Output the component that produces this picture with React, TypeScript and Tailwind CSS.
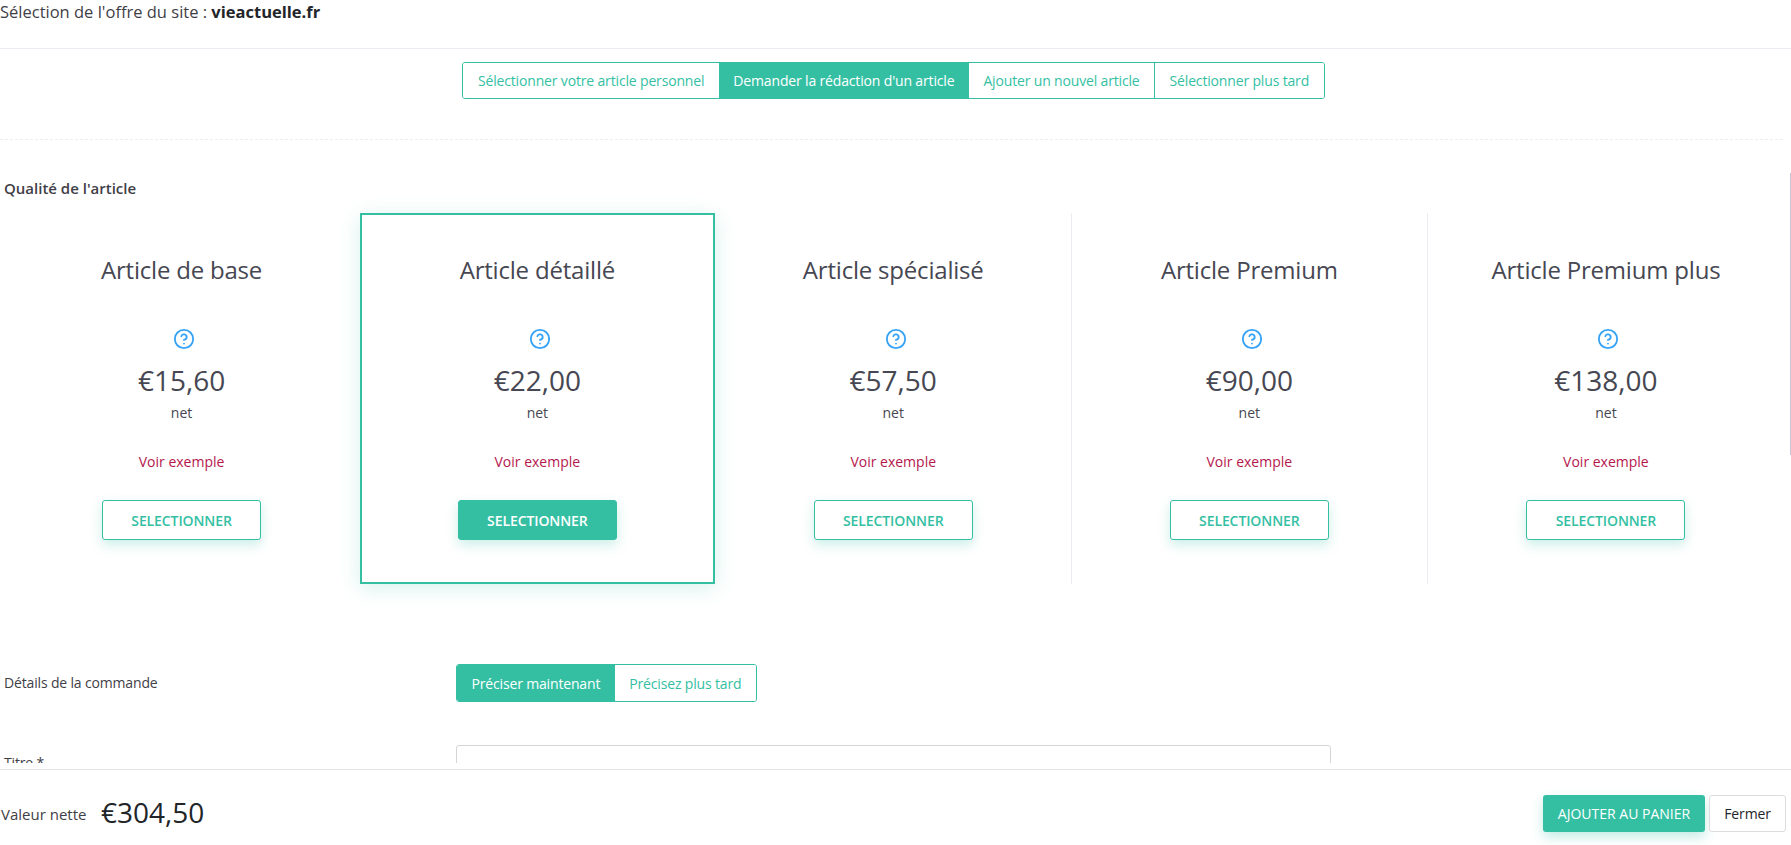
import { CircleHelp } from 'lucide-react';

const offers = [
  { name: 'Article de base', price: '€15,60' },
  { name: 'Article détaillé', price: '€22,00', selected: true },
  { name: 'Article spécialisé', price: '€57,50', divider: true },
  { name: 'Article Premium', price: '€90,00', divider: true },
  { name: 'Article Premium plus', price: '€138,00' },
];

const articleTabs = [
  { label: 'Sélectionner votre article personnel' },
  { label: "Demander la rédaction d'un article", active: true },
  { label: 'Ajouter un nouvel article' },
  { label: 'Sélectionner plus tard' },
];

const detailTabs = [
  { label: 'Préciser maintenant', active: true },
  { label: 'Précisez plus tard' },
];

function TabGroup({ tabs, height }: { tabs: { label: string; active?: boolean }[]; height: string }) {
  return (
    <div className={`flex ${height} rounded-[3px] border border-[#34bfa3] overflow-hidden text-[14px] tracking-[-0.16px]`}>
      {tabs.map((tab, i) => (
        <div
          key={tab.label}
          className={`flex items-center px-[14.5px] whitespace-nowrap ${
            tab.active ? 'bg-[#34bfa3] text-white' : 'bg-white text-[#34bfa3]'
          } ${i > 0 && !tab.active && !tabs[i - 1].active ? 'border-l border-[#34bfa3]' : ''}`}
        >
          {tab.label}
        </div>
      ))}
    </div>
  );
}

function OfferCard({ offer }: { offer: (typeof offers)[number] }) {
  return (
    <div
      className={`h-[371px] flex flex-col items-center text-[#464752] ${
        offer.selected
          ? 'w-[355.5px] mr-[0.6px] pt-[35px] border-2 border-[#34bfa3] shadow-[0_4px_20px_rgba(52,191,163,0.2)]'
          : 'w-[356.1px] pt-[37px]'
      } ${offer.divider ? 'border-r border-[#ebedf2]' : ''}`}
    >
      <h3 className="h-[40px] flex items-center text-[24px] tracking-[-0.2px]">{offer.name}</h3>
      <div className="mt-[38px] ml-[5px] h-[20px] text-[#36a3f7]">
        <CircleHelp size={22} strokeWidth={2} />
      </div>
      <div className="mt-[12px] h-[40px] flex items-center text-[28px]">{offer.price}</div>
      <div className="mt-[3px] text-[14px] leading-[20px]">net</div>
      <a className="mt-[29px] text-[14px] leading-[20px] text-[#b5174d]">Voir exemple</a>
      <button
        className={`mt-[28px] w-[159px] h-[40px] rounded-[3px] border border-[#34bfa3] text-[14px] tracking-[-0.1px] font-semibold shadow-[0_5px_12px_rgba(52,191,163,0.25)] ${
          offer.selected ? 'bg-[#34bfa3] text-white' : 'bg-white text-[#34bfa3]'
        }`}
      >
        SELECTIONNER
      </button>
    </div>
  );
}

export default function App() {
  return (
    <div className="relative h-[845px] flex flex-col overflow-hidden bg-white text-[#3f4047] font-['Open_Sans',sans-serif]">
      <div className="flex-1 min-h-0 overflow-hidden">
        {/* en-tête */}
        <div className="h-[49px] pt-px border-b border-[#ebedf2] text-[16.5px] leading-[22px]">
          Sélection de l'offre du site : <b className="text-[#212529]">vieactuelle.fr</b>
        </div>

        <div className="flex justify-center pt-[13px] pr-[4px]">
          <TabGroup tabs={articleTabs} height="h-[37px]" />
        </div>

        <div className="mt-[40px] mr-[8px] border-t border-dashed border-[#ebedf2]" />

        {/* qualité */}
        <div className="mt-[38px] pl-[4px] h-[21px] text-[15px] leading-[20px] font-semibold">
          Qualité de l'article
        </div>

        <div className="mt-[14px] pl-[3.5px] flex">
          {offers.map((offer) => (
            <OfferCard key={offer.name} offer={offer} />
          ))}
        </div>

        {/* commande */}
        <div className="mt-[80px] flex items-center h-[38px]">
          <div className="w-[456px] pl-[4px] pb-[2px] text-[14px] tracking-[-0.16px]">Détails de la commande</div>
          <TabGroup tabs={detailTabs} height="h-[38px]" />
        </div>

        <div className="mt-[43px] flex items-start">
          <div className="w-[456px] pl-[4px] pt-[8px] text-[14px] leading-[20px] tracking-[-0.16px]">Titre *</div>
          <div className="w-[875px] h-[40px] rounded-[3px] border border-[#d5d5d5]" />
        </div>
      </div>

      {/* pied */}
      <div className="mt-[6px] h-[76px] shrink-0 border-t border-[#e4e4e4] flex items-start">
        <div className="flex items-center pl-[1px] pt-[23px] h-[60px]">
          <span className="w-[100px] pt-[6px] text-[15px]">Valeur nette</span>
          <span className="text-[28px] leading-[38px] text-[#212529]">€304,50</span>
        </div>
        <div className="ml-auto mr-[5px] mt-[25px] flex gap-[4px]">
          <button className="w-[162px] h-[37px] rounded-[3px] bg-[#34bfa3] text-white text-[14px] shadow-[0_5px_12px_rgba(52,191,163,0.3)]">
            AJOUTER AU PANIER
          </button>
          <button className="w-[77px] h-[37px] rounded-[3px] border border-[#dcdcdc] bg-white text-[14px] tracking-[-0.16px] text-[#212529]">
            Fermer
          </button>
        </div>
      </div>

      {/* barre de défilement */}
      <div className="absolute right-0 top-[173px] w-px h-[282px] bg-[#c5c5d5]" />
    </div>
  );
}
